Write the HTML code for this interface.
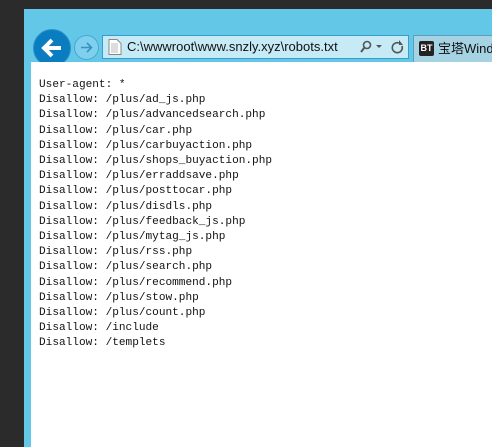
<!DOCTYPE html>
<html><head><meta charset="utf-8"><style>
html,body{margin:0;padding:0;width:492px;height:447px;overflow:hidden;background:#2b2b2b;}
.win{position:absolute;left:24px;top:9px;width:468px;height:438px;background:#63c8e8;}
.page{position:absolute;left:31px;top:62px;width:461px;height:385px;background:#fff;}
pre{position:absolute;left:39px;top:78px;margin:0;font-family:"Liberation Mono",monospace;font-size:11.1px;line-height:15.2px;color:#111;}
.back{position:absolute;left:33px;top:29px;width:36px;height:36px;border-radius:50%;background:#0a7dc0;border:1px solid #2b90c8;}
.fwd{position:absolute;left:74px;top:35px;width:23px;height:23px;border-radius:50%;border:1px solid #4aa8d0;background:#7fd0ee;}
.addr{position:absolute;left:102px;top:35px;width:305px;height:22px;background:#c6ebf7;border:1px solid #3a9cc8;}
.addr span{position:absolute;left:24px;top:3px;font-family:"Liberation Sans",sans-serif;font-size:13px;color:#111;white-space:nowrap;}
.tab{position:absolute;left:413px;top:35px;width:79px;height:27px;background:#a6d3e4;border:1px solid #5a9fbd;border-right:none;overflow:hidden;}
.tab .bt{position:absolute;left:5px;top:5px;width:15px;height:15px;background:#222;border-radius:2px;color:#fff;font:bold 9px "Liberation Sans",sans-serif;line-height:15px;text-align:center;}
.tab .t{position:absolute;left:24px;top:4px;font:13px "Liberation Sans","Noto Sans CJK SC",sans-serif;color:#111;white-space:nowrap;line-height:17px;}
</style></head><body>
<div class="win"></div>
<div class="back"><svg width="36" height="36" viewBox="0 0 36 36"><path d="M27 18H11M18 10l-8 8 8 8" stroke="#fff" stroke-width="4" fill="none" stroke-linejoin="miter"/></svg></div>
<div class="fwd"><svg width="23" height="23" viewBox="0 0 23 23"><path d="M6 11.5h10M12 7l4.5 4.5L12 16" stroke="#3a90c0" stroke-width="1.6" fill="none"/></svg></div>
<div class="addr">
<svg style="position:absolute;left:5px;top:3px" width="14" height="16" viewBox="0 0 14 16"><path d="M1 .5h8l4 4v11H1z" fill="#fff" stroke="#888"/><path d="M3 5h7M3 7h7M3 9h7M3 11h7M3 13h7" stroke="#bbb"/></svg>
<span>C:\wwwroot\www.snzly.xyz\robots.txt</span>
<svg style="position:absolute;left:256px;top:4px" width="48" height="14" viewBox="0 0 48 14"><circle cx="8" cy="5" r="3.5" stroke="#555" stroke-width="1.6" fill="none"/><path d="M5.5 7.5L2 12" stroke="#555" stroke-width="2"/><path d="M17 5h6l-3 3z" fill="#555"/><path d="M40 3a5 5 0 1 0 3 3" stroke="#555" stroke-width="1.6" fill="none"/><path d="M40 0v5h4z" fill="#555"/></svg>
</div>
<div class="tab"><div class="bt">BT</div><div class="t">宝塔Wind</div></div>
<div class="page"></div>
<pre>User-agent: *
Disallow: /plus/ad_js.php
Disallow: /plus/advancedsearch.php
Disallow: /plus/car.php
Disallow: /plus/carbuyaction.php
Disallow: /plus/shops_buyaction.php
Disallow: /plus/erraddsave.php
Disallow: /plus/posttocar.php
Disallow: /plus/disdls.php
Disallow: /plus/feedback_js.php
Disallow: /plus/mytag_js.php
Disallow: /plus/rss.php
Disallow: /plus/search.php
Disallow: /plus/recommend.php
Disallow: /plus/stow.php
Disallow: /plus/count.php
Disallow: /include
Disallow: /templets</pre>
</body></html>
